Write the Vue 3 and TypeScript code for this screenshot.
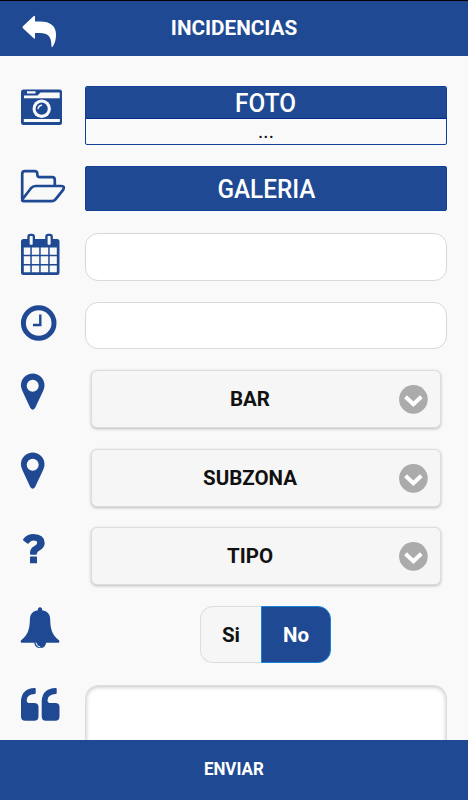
<script setup lang="ts">
import { ref } from 'vue'

const selects = ['BAR', 'SUBZONA', 'TIPO']
const answer = ref<'Si' | 'No'>('No')
</script>

<template>
  <div class="screen">
    <header class="header">
      <svg class="back" viewBox="0 0 36 34">
        <path d="M1.2 11 11.5 1.2Q13-.2 13 2V6.500H18Q34 6.500 34 20Q34 26.500 30.800 31.500Q29.600 33 29.400 31C29.600 21.500 26 18.200 18 18H13V22.500Q13 24.500 11.500 23.100L1.200 13.500Q0 12.200 1.200 11Z" />
      </svg>
      <h1 class="title"><span>INCIDENCIAS</span></h1>
    </header>

    <main class="form">
      <div class="row photo-row">
        <svg class="icon" viewBox="0 0 46 48">
          <rect x="1" y="3.500" width="41" height="35.500" rx="2.500" />
          <path class="paper" d="M4 9.500H17.500L20.500 6.500H39.700V12.300H4ZM3.800 33H39.800V36H3.800ZM7 5.200H15.500V7.500H7Z" />
          <circle class="paper" cx="21.700" cy="22.700" r="9.200" />
          <circle cx="21.700" cy="22.700" r="6.100" />
          <path class="glint" d="M18.200 22.500Q18.500 19.800 21.500 19.300" />
        </svg>
        <div class="photo">
          <button class="photo-button"><span class="label">FOTO</span></button>
          <div class="photo-name">...</div>
        </div>
      </div>

      <div class="row gallery-row">
        <svg class="icon outlined" viewBox="0 0 46 48">
          <path d="M2.200 33V8Q2.200 5.200 5 5.200H14.500Q17.300 5.200 17.300 8V8.500Q17.300 11.200 20 11.200H32Q34.800 11.200 34.800 14V19.500M2.300 33.500Q1.500 35.200 5 35.200H31.500Q34 35.200 35.500 33.300L43.300 23.600Q45 20 41.500 20H15.500Q12.800 20 11 22.200Z" />
        </svg>
        <button class="gallery-button"><span class="label">GALERIA</span></button>
      </div>

      <div class="row input-row">
        <svg class="icon" viewBox="0 0 46 48">
          <rect x="1" y="6" width="38.500" height="36" rx="2.500" />
          <rect x="7.300" y=".8" width="7.700" height="13" rx="3" />
          <rect x="25.200" y=".8" width="7.700" height="13" rx="3" />
          <path class="paper" d="M3.800 14.500H10.300V21.800H3.800ZM11.800 14.500H19.200V21.800H11.800ZM20.700 14.500H28.200V21.800H20.700ZM29.700 14.500H36.800V21.800H29.700ZM3.800 23.300H10.300V31H3.800ZM11.800 23.300H19.200V31H11.800ZM20.700 23.300H28.200V31H20.700ZM29.700 23.300H36.800V31H29.700ZM3.800 32.400H10.300V39.200H3.800ZM11.800 32.400H19.200V39.200H11.800ZM20.700 32.400H28.200V39.200H20.700ZM29.700 32.400H36.800V39.200H29.700Z" />
          <rect class="paper" x="9.700" y="3" width="3" height="8.700" rx=".8" />
          <rect class="paper" x="27.600" y="3" width="3" height="8.700" rx=".8" />
        </svg>
        <input class="text-input" type="text" aria-label="Fecha" />
      </div>

      <div class="row input-row">
        <svg class="icon" viewBox="0 0 46 48">
          <circle class="clock-ring" cx="18.700" cy="21" r="15.300" />
          <path class="clock-hands" d="M20.300 12.500V23H13" />
        </svg>
        <input class="text-input" type="text" aria-label="Hora" />
      </div>

      <div v-for="(name, i) in selects" :key="name" class="row select-row">
        <svg class="icon" viewBox="0 0 46 48">
          <path v-if="i < 2" fill-rule="evenodd" d="M12.700 3.500A12 12 0 0 0 .9 15.500Q1 18.300 2.500 21.200L10.300 38Q12.700 41.500 15.100 38L23 21.200Q24.500 18.300 24.500 15.500A12 12 0 0 0 12.700 3.500ZM12.700 9.700A6 6 0 1 1 12.700 21.700A6 6 0 1 1 12.700 9.700Z" />
          <path v-else d="M3.300 12Q7 6.900 13.500 6.900Q24.700 7.200 24.700 16Q24.700 20.800 19.500 23.500Q17.200 24.900 17 26.200Q17 27.700 16 27.700H10.800Q10 27.700 10 26.200Q9.800 21.200 14.500 18.900Q17.200 17.700 17.200 15.700Q17 13.500 13.600 13.500Q11 13.500 9.300 15.700Q8.200 17.200 7.300 16.500L3.600 13.700Q2.600 13 3.300 12ZM10.500 29.500H16.500Q17 29.500 17 30V35.800Q17 36.300 16.500 36.300H10.500Q10 36.300 10 35.800V30Q10 29.500 10.500 29.500Z" />
        </svg>
        <button class="select">
          <span>{{ name }}</span>
          <svg class="chevron" viewBox="0 0 30 30">
            <circle cx="15.400" cy="15.400" r="14.300" />
            <path d="M7.500 12.800 15.400 20.200 23.300 12.800" />
          </svg>
        </button>
      </div>

      <div class="row toggle-row">
        <svg class="icon" viewBox="0 0 46 48">
          <path d="M20 1.300Q22.200 1.300 22.200 4.200C27.500 4.900 30.200 8.500 30.200 13.500C30.400 24 32.500 29 39.200 34.500Q40 36.800 37.500 36.800H26.100A6 6 0 0 1 14.200 36.800H2.500Q0 36.800 .9 34.500C7.500 29 9.700 24 9.900 13.500C10 8.500 12.500 5 17.800 4.200Q17.800 1.300 20 1.300Z" />
          <path class="glint bell-glint" d="M16 37Q16.500 40.700 20 41" />
        </svg>
        <div class="toggle">
          <button class="option" :class="{ active: answer === 'Si' }" @click="answer = 'Si'">Si</button>
          <button class="option" :class="{ active: answer === 'No' }" @click="answer = 'No'">No</button>
        </div>
      </div>

      <div class="row notes-row">
        <svg class="icon" viewBox="0 0 46 48">
          <path d="M14.500 3H15Q15.700 3 15.700 4V8Q15.700 9 14.700 9Q7 9.300 6.700 15.200Q6.700 18 9.500 18H14Q18.500 18 18.500 22.200V31.500Q18.500 35.700 14.200 35.700H5.300Q1 35.700 1 31.500V15.500Q2 3.500 14.500 3ZM35.500 3H36Q36.700 3 36.700 4V8Q36.700 9 35.700 9Q28 9.300 27.500 15.200Q27.500 18 30.500 18H35.300Q39.500 18 39.500 22.200V31.500Q39.500 35.700 35.300 35.700H26Q21.700 35.700 21.700 31.500V15.500Q22.700 3.500 35.500 3Z" />
        </svg>
        <textarea class="notes" aria-label="Comentarios"></textarea>
      </div>
    </main>

    <button class="send"><span>ENVIAR</span></button>
  </div>
</template>

<style>
body {
  margin: 0;
}
</style>

<style scoped>
.screen {
  display: flex;
  flex-direction: column;
  box-sizing: border-box;
  width: 468px;
  height: 800px;
  overflow: hidden;
  border-top: 1px solid #000;
  background: #f9f9f9;
  font-family: Roboto, "Liberation Sans", sans-serif;
}

button,
input,
textarea {
  box-sizing: border-box;
  margin: 0;
  padding: 0;
  border: 0;
  border-radius: 0;
  outline: 0;
  font-family: inherit;
}

.header {
  display: grid;
  grid-template-columns: 64px 1fr 64px;
  flex: none;
  height: 55px;
  background: #1f4a93;
  color: #fff;
}

.back {
  width: 36px;
  height: 34px;
  margin: 14px 0 0 22px;
  fill: #fff;
}

.title {
  margin: 0;
  font-size: 20px;
  font-weight: 700;
  line-height: 54px;
  text-align: center;
}

.title span {
  display: inline-block;
  transform: scaleX(1.035);
}

.form {
  display: flex;
  flex: 1;
  flex-direction: column;
  min-height: 0;
  padding: 30px 21px 0 20px;
  overflow: hidden;
}

.row {
  display: grid;
  flex: none;
  grid-template-columns: 65px 362px;
  align-items: start;
}

.photo-row {
  height: 80px;
}

.gallery-row {
  height: 67px;
}

.input-row {
  height: 68.5px;
}

.select-row {
  height: 78.7px;
}

.toggle-row {
  height: 79px;
}

.notes-row {
  height: 120px;
}

.icon {
  width: 46px;
  height: 48px;
  fill: #1f4a93;
}

.paper {
  fill: #f9f9f9;
}

.glint {
  fill: none;
  stroke: #f9f9f9;
  stroke-width: 1.5;
  stroke-linecap: round;
}

.bell-glint {
  stroke-width: 1;
}

.outlined {
  fill: none;
  stroke: #1f4a93;
  stroke-width: 2.7;
  stroke-linejoin: round;
}

.clock-ring {
  fill: none;
  stroke: #1f4a93;
  stroke-width: 5;
}

.clock-hands {
  fill: none;
  stroke: #1f4a93;
  stroke-width: 2.4;
}

.photo {
  box-sizing: border-box;
  height: 59px;
  overflow: hidden;
  border: 1px solid #10409a;
  border-radius: 2px;
}

.photo-button,
.gallery-button {
  display: block;
  width: 100%;
  background: #1f4a93;
  color: #fff;
  font-size: 26px;
  font-weight: 500;
}

.photo-button {
  height: 32px;
  border-bottom: 1px solid #052a8b;
  line-height: 30px;
}

.photo-name {
  color: #111;
  font-size: 20px;
  line-height: 24px;
  text-align: center;
}

.gallery-button {
  height: 45px;
  border: 1px solid #10409a;
  border-radius: 2px;
  line-height: 45px;
}

.label {
  display: inline-block;
  transform: scaleX(.935);
}

.text-input {
  width: 362px;
  height: 47.5px;
  border: 1px solid #d9d9d9;
  border-radius: 13px;
  background: #fff;
}

.select {
  display: grid;
  grid-template-columns: 30px 1fr 30px;
  align-items: center;
  width: 350px;
  height: 58px;
  margin: 0 6px;
  padding: 0 12px;
  border: 1px solid #ddd;
  border-radius: 6px;
  background: #f6f6f6;
  box-shadow: 0 1px 3px rgba(0, 0, 0, .25);
  color: #111;
  font-size: 20.5px;
  font-weight: 700;
}

.select span {
  grid-column: 2;
  padding-right: 32px;
}

.chevron {
  width: 30px;
  height: 30px;
  overflow: visible;
  fill: #ababab;
}

.chevron path {
  fill: none;
  stroke: #fff;
  stroke-width: 4;
}

.toggle {
  display: grid;
  grid-template-columns: 61px 70px;
  height: 57px;
  margin-left: 115px;
}

.option {
  border: 1px solid #ddd;
  background: #f6f6f6;
  color: #111;
  font-size: 20.5px;
  font-weight: 700;
}

.option:first-child {
  border-right: 0;
  border-radius: 13px 0 0 13px;
}

.option:last-child {
  border-radius: 0 13px 13px 0;
}

.option.active {
  border-color: #1683d5;
  background: #1f4a93;
  color: #fff;
}

.notes {
  width: 362px;
  height: 110px;
  border: 1px solid #ddd;
  border-radius: 13px;
  background: #fff;
  box-shadow: inset 0 1px 4px rgba(0, 0, 0, .25);
  resize: none;
}

.send {
  flex: none;
  width: 100%;
  height: 60px;
  padding-bottom: 2px;
  background: #1f4a93;
  color: #fff;
  font-size: 18px;
  font-weight: 700;
  line-height: 58px;
}

.send span {
  display: inline-block;
  transform: scaleX(.94);
}
</style>
